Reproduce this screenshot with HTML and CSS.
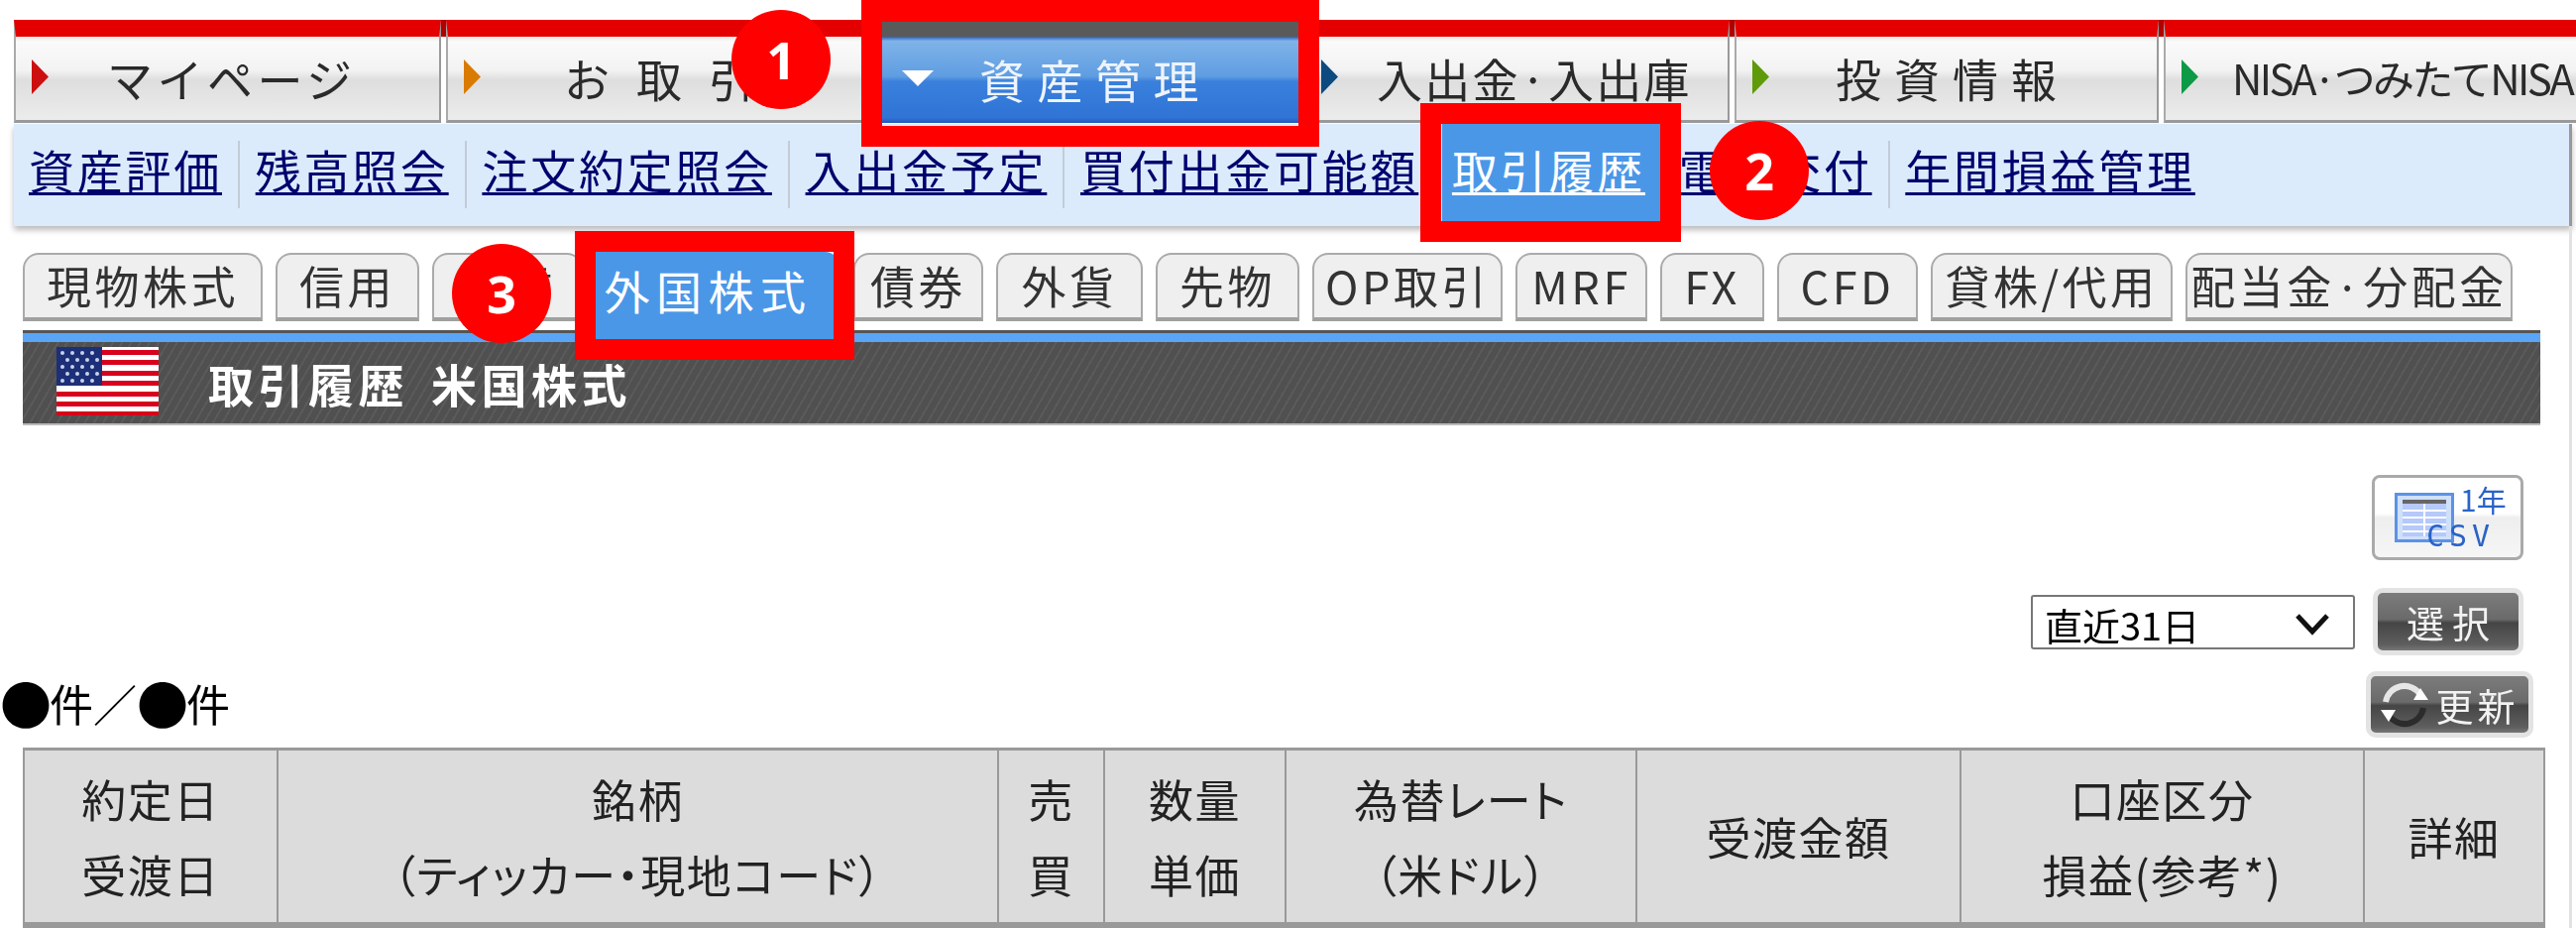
FILE: index.html
```html
<!DOCTYPE html>
<html lang="ja">
<head>
  <meta charset="UTF-8" />
  <title>取引履歴 米国株式</title>
  <link rel="stylesheet" href="styles.css">
</head>
<body>
  <div class="page">
    <div class="mainnav">
      <div class="nav-tab nav-mypage"><i class="arrow"></i><span class="label">マイページ</span></div>
      <div class="nav-tab nav-trade"><i class="arrow"></i><span class="label">お取引</span></div>
      <div class="nav-tab nav-assets"><i class="arrow-down"></i><span class="label">資産管理</span></div>
      <div class="nav-tab nav-cash"><i class="arrow"></i><span class="label">入出金·入出庫</span></div>
      <div class="nav-tab nav-info"><i class="arrow"></i><span class="label">投資情報</span></div>
      <div class="nav-tab nav-nisa"><i class="arrow"></i><span class="label">NISA·つみたてNISA</span></div>
    </div>

    <div class="subnav">
      <a href="#">資産評価</a><i class="sep"></i>
      <a href="#">残高照会</a><i class="sep"></i>
      <a href="#">注文約定照会</a><i class="sep"></i>
      <a href="#">入出金予定</a><i class="sep"></i>
      <a href="#">買付出金可能額</a><i class="sep"></i>
      <a href="#" class="current">取引履歴</a><i class="sep"></i>
      <a href="#">電子交付</a><i class="sep"></i>
      <a href="#">年間損益管理</a>
    </div>

    <div class="main">
      <div class="subtabs">
        <div class="subtab">現物株式</div>
        <div class="subtab">信用</div>
        <div class="subtab">投信</div>
        <div class="subtab active">外国株式</div>
        <div class="subtab">債券</div>
        <div class="subtab">外貨</div>
        <div class="subtab">先物</div>
        <div class="subtab">OP取引</div>
        <div class="subtab">MRF</div>
        <div class="subtab">FX</div>
        <div class="subtab">CFD</div>
        <div class="subtab">貸株/代用</div>
        <div class="subtab">配当金·分配金</div>
      </div>

      <div class="titlebar">
        <svg class="flag" viewBox="0 0 103 69" width="103" height="69">
          <rect width="103" height="69" fill="#fff"/>
          <g fill="#d8001c">
            <rect y="3" width="103" height="5"/><rect y="13" width="103" height="5"/>
            <rect y="24" width="103" height="5"/><rect y="34" width="103" height="5"/>
            <rect y="45" width="103" height="5"/><rect y="55" width="103" height="5"/>
            <rect y="65" width="103" height="4"/>
          </g>
          <rect width="46" height="39" fill="#1c2f78"/>
          <g fill="#c9d2ea">
            <circle cx="6" cy="6" r="2"/><circle cx="16" cy="6" r="2"/><circle cx="26" cy="6" r="2"/><circle cx="36" cy="6" r="2"/>
            <circle cx="11" cy="13" r="2"/><circle cx="21" cy="13" r="2"/><circle cx="31" cy="13" r="2"/><circle cx="41" cy="13" r="2"/>
            <circle cx="6" cy="20" r="2"/><circle cx="16" cy="20" r="2"/><circle cx="26" cy="20" r="2"/><circle cx="36" cy="20" r="2"/>
            <circle cx="11" cy="27" r="2"/><circle cx="21" cy="27" r="2"/><circle cx="31" cy="27" r="2"/><circle cx="41" cy="27" r="2"/>
            <circle cx="6" cy="34" r="2"/><circle cx="16" cy="34" r="2"/><circle cx="26" cy="34" r="2"/><circle cx="36" cy="34" r="2"/>
          </g>
        </svg>
        <h1>取引履歴 米国株式</h1>
      </div>

      <div class="tools">
        <div class="csv-btn">
          <svg class="csv-icon" viewBox="0 0 60 50" width="60" height="50">
            <rect x="1.5" y="1.5" width="57" height="47" fill="#cfe0fb" stroke="#5b93e6" stroke-width="3"/>
            <rect x="8" y="7" width="44" height="4" fill="#666"/>
            <rect x="8" y="11" width="44" height="33" fill="#b5c9fa"/>
            <g stroke="#fff" stroke-width="2">
              <path d="M8 18H52M8 25H52M8 32H52M8 39H52M30 11V44"/>
            </g>
          </svg>
          <span class="csv-year">1年</span>
          <span class="csv-text">CSV</span>
        </div>
        <div class="period">
          <div class="select-wrap">
            <select>
              <option>直近31日</option>
            </select>
            <svg class="chevron" viewBox="0 0 36 24" width="36" height="24"><path d="M3 4L18 20L33 4" fill="none" stroke="#111" stroke-width="5"/></svg>
          </div>
          <div class="dark-btn select-btn">選択</div>
        </div>
      </div>

      <div class="count-row">
        <div class="count"><span class="dot">●</span>件／<span class="dot">●</span>件</div>
        <div class="dark-btn refresh-btn">
          <svg viewBox="0 0 50 50" width="50" height="50">
            <path d="M6 22A19 19 0 0 1 41 15" fill="none" stroke="#e6e6e6" stroke-width="6"/>
            <path d="M44 28A19 19 0 0 1 9 35" fill="none" stroke="#2c2c2c" stroke-width="6"/>
            <path d="M34 20L49 20L41 8Z" fill="#fff"/>
            <path d="M1 30L16 30L9 42Z" fill="#fff"/>
          </svg>
          <span>更新</span>
        </div>
      </div>

      <table class="history">
        <colgroup>
          <col class="c-date"><col class="c-name"><col class="c-side"><col class="c-qty">
          <col class="c-rate"><col class="c-amount"><col class="c-account"><col class="c-detail">
        </colgroup>
        <thead>
          <tr>
            <th>約定日<br>受渡日</th>
            <th>銘柄<br>（ティッカー・現地コード）</th>
            <th>売<br>買</th>
            <th>数量<br>単価</th>
            <th>為替レート<br>（米ドル）</th>
            <th>受渡金額</th>
            <th>口座区分<br>損益(参考*)</th>
            <th>詳細</th>
          </tr>
        </thead>
      </table>
    </div>
  </div>

  <div class="mark mark-1"></div>
  <div class="mark mark-2"></div>
  <div class="mark mark-3"></div>
  <div class="badge badge-1">1</div>
  <div class="badge badge-2">2</div>
  <div class="badge badge-3">3</div>
</body>
</html>
```
FILE: styles.css
```css
html, body {
  margin: 0;
  padding: 0;
  height: 936px;
  overflow: hidden;
  background: #fff;
}
body {
  position: relative;
  font-family: "Noto Sans CJK JP", "Liberation Sans", sans-serif;
  color: #222;
}
.page {
  padding-top: 20px;
  filter: blur(0.5px);
}

/* main nav */
.mainnav {
  display: grid;
  grid-template-columns: 431px 435px 420px 430px 428px 416px;
  column-gap: 5px;
  margin-left: 14px;
  height: 104px;
  background: linear-gradient(#b00000 17px, transparent 17px);
}
.nav-tab {
  display: flex;
  align-items: center;
  box-sizing: border-box;
  padding-bottom: 3px;
  border-top: 17px solid #e40000;
  border-left: 2px solid #aaa;
  border-right: 2px solid #999;
  border-bottom: 3px solid #999;
  background: linear-gradient(#e8e8e8, #fafafa 6%, #f3f3f3 40%, #dedede 52%, #ececec 100%);
  white-space: nowrap;
  overflow: hidden;
  font-size: 46px;
  line-height: 1;
  color: #2a2a2a;
}
.arrow {
  flex: none;
  width: 17px;
  height: 35px;
  margin-left: 16px;
  clip-path: polygon(0 0, 100% 50%, 0 100%);
}
.arrow-down {
  flex: none;
  width: 32px;
  height: 16px;
  margin-left: 20px;
  background: #fff;
  clip-path: polygon(0 0, 100% 0, 50% 100%);
}
.nav-mypage .arrow { background: #cc1010; }
.nav-mypage .label { margin-left: 59px; letter-spacing: 4.5px; }
.nav-trade .arrow { background: #d97b00; }
.nav-trade .label { margin-left: 84px; letter-spacing: 27px; }
.nav-assets {
  border: 0;
  border-top: 17px solid #5a5a5a;
  background: linear-gradient(#2a5cc0, #7fb3e8 5%, #5f9de2 46%, #3a80dc 52%, #2f74d6 94%, #2456b8 100%);
  color: #eef4fc;
}
.nav-assets .label { margin-left: 46px; letter-spacing: 12.5px; }
.nav-cash .arrow { background: #0d4a80; }
.nav-cash .label { margin-left: 39px; letter-spacing: 2.3px; }
.nav-info .arrow { background: #5f9a0a; }
.nav-info .label { margin-left: 67px; letter-spacing: 13px; }
.nav-nisa { border-right: 0; }
.nav-nisa .arrow { background: #0c9a46; }
.nav-nisa .label { margin-left: 34px; font-size: 42px; letter-spacing: -2.6px; }

/* sub nav */
.subnav {
  display: flex;
  align-items: stretch;
  box-sizing: border-box;
  height: 103px;
  margin: 1px 4px 0 14px;
  padding-left: 15px;
  background: #dbebfc;
  border-right: 3px solid #999;
  box-shadow: 0 4px 6px #bbb;
  font-size: 46px;
  letter-spacing: 2.75px;
  line-height: 1;
}
.subnav a {
  display: block;
  padding: 22px 0 0;
  color: #00006e;
  text-decoration: underline;
  text-decoration-thickness: 3px;
  text-underline-offset: 4px;
}
.subnav a.current {
  position: relative;
  z-index: 1;
  margin: 0 -18px 0 -10px;
  padding: 22px 18px 0 10px;
  height: 98px;
  box-sizing: border-box;
  background: #4a97e8;
  color: #fff;
}
.sep {
  flex: none;
  width: 2px;
  height: 68px;
  margin: 17px 15.7px 0 16px;
  background: #c3ccd5;
}

/* sub tabs */
.main {
  margin-right: 4px;
  padding: 17px 0 0 23px;
  border-right: 3px solid #e2e2e2;
  height: 708px;
  box-sizing: border-box;
}
.subtabs {
  display: grid;
  grid-template-columns: 242px 145px 152px 247px 131px 148px 145px 192px 133px 105px 142px 244px 330px;
  grid-template-rows: 69px;
  align-items: start;
  column-gap: 13px;
  margin-top: 10px;
  margin-bottom: 12px;
}
.subtab {
  box-sizing: border-box;
  height: 69px;
  border: 2px solid #aaa;
  border-bottom: 4px solid #a0a0a0;
  border-radius: 16px 16px 0 0;
  background: #efefef;
  font-size: 45px;
  letter-spacing: 3.5px;
  line-height: 62px;
  text-align: center;
  color: #333;
  white-space: nowrap;
}
.subtab.active {
  position: relative;
  z-index: 1;
  height: 88px;
  margin-top: -1px;
  padding-right: 20px;
  border: 0;
  border-radius: 0 16px 0 0;
  background: #4a97e8;
  color: #fff;
  font-size: 46px;
  letter-spacing: 6.5px;
  line-height: 76px;
}

/* title bar */
.titlebar {
  display: flex;
  align-items: center;
  box-sizing: border-box;
  width: 2540px;
  height: 91px;
  padding-left: 34px;
  border-top: 9px solid #5aa5f5;
  box-shadow: 0 -3px 0 #555, 0 2px 0 #bbb;
  background: repeating-linear-gradient(120deg, #505050 0 6px, #5a5a5a 6px 8px);
}
.flag { flex: none; margin-top: -3px; }
.titlebar h1 {
  margin: 0 0 0 50px;
  font-size: 46px;
  font-weight: 700;
  letter-spacing: 4.5px;
  word-spacing: 8px;
  line-height: 1;
  color: #fff;
}

/* tools */
.tools {
  display: flex;
  flex-direction: column;
  align-items: flex-end;
  box-sizing: border-box;
  height: 250px;
  padding: 52px 46px 0 0;
}
.csv-btn {
  position: relative;
  box-sizing: border-box;
  width: 153px;
  height: 86px;
  border: 3px solid #aaa;
  border-radius: 8px;
  background: linear-gradient(#fff 45%, #eeeeee 50%, #f6f6f6 100%);
}
.csv-icon {
  position: absolute;
  left: 20px;
  top: 15px;
}
.csv-year, .csv-text {
  position: absolute;
  color: #2a62c8;
  font-size: 30px;
  line-height: 1;
  white-space: nowrap;
}
.csv-year { left: 86px; top: 6px; }
.csv-text { left: 52px; top: 44px; letter-spacing: 5px; font-family: "DejaVu Sans Mono", monospace; }
.period {
  display: flex;
  align-items: center;
  gap: 18px;
  margin-top: 28px;
}
.select-wrap {
  position: relative;
  width: 327px;
  height: 55px;
}
.select-wrap select {
  appearance: none;
  box-sizing: border-box;
  width: 100%;
  height: 100%;
  padding: 0 0 2px 12px;
  border: 2px solid #777;
  border-radius: 3px;
  background: #fff;
  color: #000;
  font-family: inherit;
  font-size: 38px;
}
.chevron {
  position: absolute;
  right: 25px;
  top: 17px;
  pointer-events: none;
}
.dark-btn {
  display: flex;
  align-items: center;
  justify-content: center;
  box-sizing: border-box;
  border: 5px solid #e3e3e3;
  border-radius: 10px;
  background: linear-gradient(#7c7c7c, #6a6a6a 46%, #454545 52%, #5e5e5e 90%, #777 100%);
  color: #f2f2f2;
  font-size: 38px;
  line-height: 1;
}
.select-btn {
  width: 152px;
  height: 68px;
  letter-spacing: 8px;
  padding-left: 8px;
}

/* count row */
.count-row {
  display: flex;
  justify-content: space-between;
  align-items: flex-start;
  height: 77px;
  margin-left: -23px;
  padding-right: 36px;
}
.count {
  font-size: 44px;
  font-feature-settings: "palt";
  line-height: 1;
  margin-top: 10px;
  color: #000;
}
.dot {
  display: inline-block;
  width: 50px;
  font-size: 52px;
  line-height: 44px;
  text-align: center;
  vertical-align: top;
}
.refresh-btn {
  width: 169px;
  height: 67px;
  gap: 6px;
}
.refresh-btn span { letter-spacing: 4px; }

/* table */
.history {
  table-layout: fixed;
  border-collapse: collapse;
  width: 2543px;
  border-top: 3px solid #999;
  border-bottom: 6px solid #999;
}
.c-date { width: 256px; }
.c-name { width: 727px; }
.c-side { width: 107px; }
.c-qty { width: 183px; }
.c-rate { width: 354px; }
.c-amount { width: 327px; }
.c-account { width: 407px; }
.c-detail { width: 182px; }
.history th {
  height: 173px;
  padding: 0;
  border: 2px solid #999;
  border-top: 0;
  border-bottom: 0;
  background: #dcdcdc;
  font-size: 45px;
  font-weight: 400;
  font-feature-settings: "palt";
  letter-spacing: 1.5px;
  line-height: 76px;
  text-align: center;
  color: #222;
}

/* annotations */
.mark {
  position: absolute;
  box-sizing: border-box;
  border: 21px solid #f00;
}
.mark-1 { left: 869px; top: 0; width: 462px; height: 148px; border-top-width: 22px; }
.mark-2 { left: 1433px; top: 104px; width: 263px; height: 140px; }
.mark-3 { left: 580px; top: 233px; width: 282px; height: 130px; }
.badge {
  position: absolute;
  width: 100px;
  height: 100px;
  border-radius: 50%;
  background: #f00;
  color: #fff;
  font-family: "Noto Sans", sans-serif;
  font-size: 52px;
  font-weight: 700;
  line-height: 100px;
  text-align: center;
}
.badge-1 { left: 738px; top: 10px; }
.badge-2 { left: 1725px; top: 122px; }
.badge-3 { left: 456px; top: 246px; }
```
